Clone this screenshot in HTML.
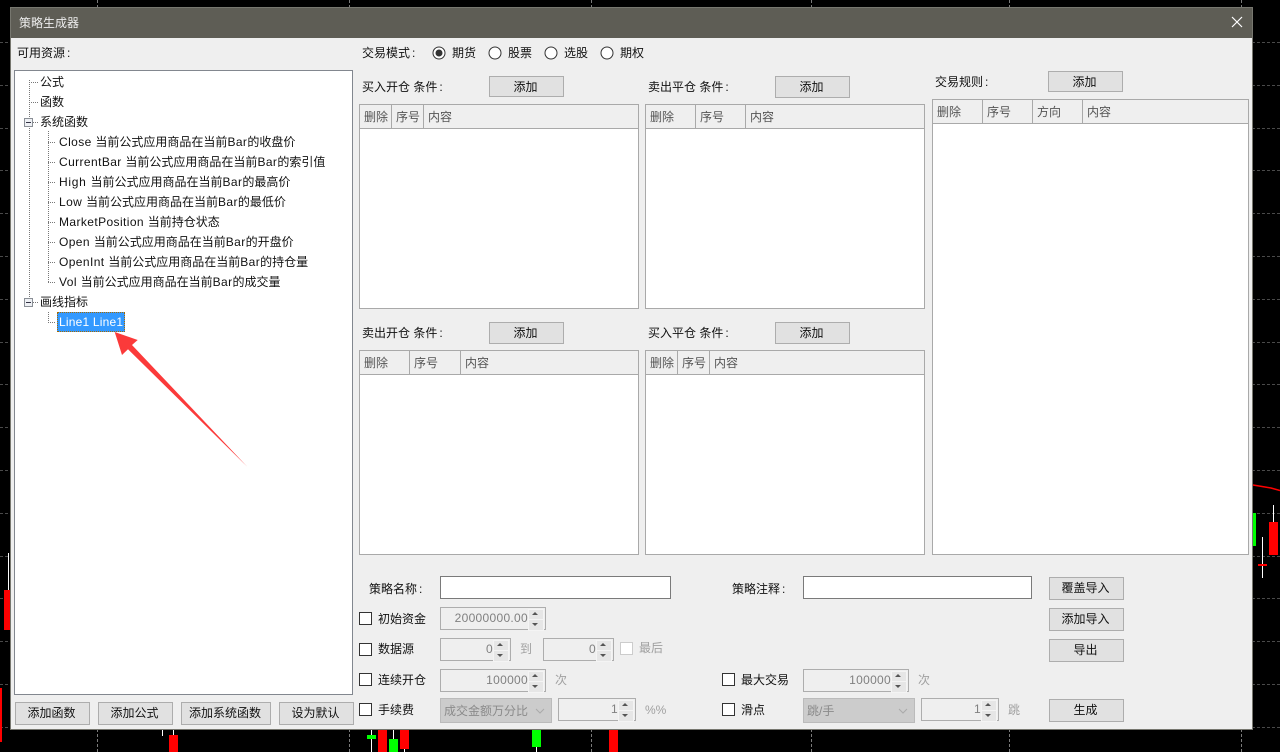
<!DOCTYPE html>
<html><head><meta charset="utf-8"><style>
html,body{margin:0;padding:0;background:#000;width:1280px;height:752px;overflow:hidden}
body{position:relative;font:12px/20px "Liberation Sans","Noto Sans CJK SC",sans-serif;color:#111}
div,span{position:absolute;box-sizing:border-box}
span{white-space:nowrap;height:20px}
em{font-style:normal;letter-spacing:.4px}
em.k{letter-spacing:0;padding-left:2px}
.h{left:0;width:1280px;height:0;border-top:1px dashed #4a4a4a}
.v{top:0;height:752px;width:0;border-left:1px dashed #7a7a7a}
.c{background:#f00}.g{background:#0f0}.w{background:#fff;width:1px}
.tbl{background:#fff;border:1px solid #a9a9a9}
.hd{left:0;right:0;top:0;height:24px;background:#efefef;border-bottom:1px solid #a9a9a9}
.sep{top:0;width:1px;height:23px;background:#a9a9a9}
.th{top:2px;color:#555}
.btn{background:#e1e1e1;border:1px solid #adadad;text-align:center;line-height:20px;color:#111;padding-right:2px}
.inp{background:#fff;border:1px solid #7a7a7a;height:23px}
.cb{width:13px;height:13px;background:#fff;border:1px solid #333}
.spin{background:#efefef;border:1px solid #adadad;height:23px;color:#808080;text-align:right;line-height:20px}
.spin b{position:absolute;right:17px;top:0;font-weight:normal;letter-spacing:.3px}
.up,.dn{position:absolute;right:1px;width:14px;height:10px;background:#e6e6e6;border:1px solid #f4f4f4}
.up{top:1px}.dn{top:11px}
.up:after,.dn:after{content:"";position:absolute;left:3px;border-left:3px solid transparent;border-right:3px solid transparent}
.up:after{top:2px;border-bottom:3px solid #555}
.dn:after{top:3px;border-top:3px solid #555}
.sel{background:#ccc;border:1px solid #bbb;height:25px;color:#8a8a8a;padding-left:3px;line-height:24px}
.dis{color:#a0a0a0}
.dh{height:1px;background-image:linear-gradient(90deg,#777 50%,transparent 50%);background-size:2px 1px}
.dv{width:1px;background-image:linear-gradient(#777 50%,transparent 50%);background-size:1px 2px}
.pm{width:9px;height:9px;background:#eef0f4;border:1px solid #8a8f96}
.pm:after{content:"";position:absolute;left:1px;top:3px;width:5px;height:1px;background:#334}
</style></head><body>
<div class="h" style="top:42px"></div><div class="h" style="top:85px"></div><div class="h" style="top:128px"></div><div class="h" style="top:170px"></div><div class="h" style="top:213px"></div><div class="h" style="top:256px"></div><div class="h" style="top:299px"></div><div class="h" style="top:342px"></div><div class="h" style="top:384px"></div><div class="h" style="top:427px"></div><div class="h" style="top:470px"></div><div class="h" style="top:513px"></div><div class="h" style="top:556px"></div><div class="h" style="top:598px"></div><div class="h" style="top:641px"></div><div class="h" style="top:684px"></div><div class="h" style="top:727px"></div>
<div class="v" style="left:97px"></div><div class="v" style="left:349px"></div><div class="v" style="left:591px"></div><div class="v" style="left:811px"></div><div class="v" style="left:1009px"></div><div class="v" style="left:1241px"></div>

<div class="w" style="left:8px;top:553px;height:37px"></div>
<div class="c" style="left:4px;top:590px;width:6px;height:40px"></div>
<div class="c" style="left:0;top:688px;width:2px;height:54px"></div>
<div class="w" style="left:162px;top:730px;height:6px"></div>
<div class="w" style="left:173px;top:730px;height:22px"></div>
<div class="c" style="left:169px;top:735px;width:9px;height:17px"></div>
<div class="w" style="left:371px;top:730px;height:22px"></div>
<div class="g" style="left:367px;top:735px;width:9px;height:4px"></div>
<div class="c" style="left:378px;top:730px;width:9px;height:22px"></div>
<div class="w" style="left:393px;top:730px;height:10px"></div>
<div class="g" style="left:389px;top:739px;width:9px;height:13px"></div>
<div class="w" style="left:404px;top:730px;height:22px"></div>
<div class="c" style="left:400px;top:730px;width:9px;height:19px"></div>
<div class="w" style="left:536px;top:730px;height:22px"></div>
<div class="g" style="left:532px;top:730px;width:9px;height:17px"></div>
<div class="c" style="left:609px;top:730px;width:9px;height:22px"></div>
<div class="g" style="left:1253px;top:513px;width:3px;height:33px"></div>
<div class="w" style="left:1262px;top:537px;height:41px"></div>
<div class="c" style="left:1258px;top:564px;width:9px;height:2px"></div>
<div class="w" style="left:1273px;top:505px;height:18px"></div>
<div class="c" style="left:1269px;top:522px;width:9px;height:33px"></div>
<svg style="position:absolute;left:1253px;top:480px" width="27" height="14"><path d="M0 5L9 6.500 18 8 27 10.500" stroke="#f00" stroke-width="1.500" fill="none"/></svg>

<!-- dialog -->
<div style="left:10px;top:7px;width:1243px;height:723px;background:#efefef;border:1px solid #77776f"></div>
<div style="left:11px;top:8px;width:1241px;height:30px;background:#5e5d55"></div>
<span style="left:19px;top:13px;color:#eee;font-size:12px">策略生成器</span>
<svg style="position:absolute;left:1231px;top:16px" width="12" height="12"><path d="M1 1L11 11M11 1L1 11" stroke="#fff" stroke-width="1.200"/></svg>

<span style="left:17px;top:43px">可用资源<em class="k">:</em></span>

<!-- tree -->
<div style="left:14px;top:70px;width:339px;height:625px;background:#fff;border:1px solid #82878f"></div>
<div class="dv" style="left:29px;top:80px;height:220px"></div>
<div class="dh" style="left:29px;top:82px;width:9px"></div>
<div class="dh" style="left:29px;top:102px;width:9px"></div>
<div class="dh" style="left:33px;top:122px;width:5px"></div>
<div class="dh" style="left:33px;top:302px;width:5px"></div>
<div class="pm" style="left:24px;top:118px"></div>
<div class="pm" style="left:24px;top:298px"></div>
<div class="dv" style="left:48px;top:131px;height:151px"></div>
<div class="dh" style="left:48px;top:142px;width:8px"></div>
<div class="dh" style="left:48px;top:162px;width:8px"></div>
<div class="dh" style="left:48px;top:182px;width:8px"></div>
<div class="dh" style="left:48px;top:202px;width:8px"></div>
<div class="dh" style="left:48px;top:222px;width:8px"></div>
<div class="dh" style="left:48px;top:242px;width:8px"></div>
<div class="dh" style="left:48px;top:262px;width:8px"></div>
<div class="dh" style="left:48px;top:282px;width:8px"></div>
<div class="dv" style="left:48px;top:312px;height:10px"></div>
<div class="dh" style="left:48px;top:322px;width:8px"></div>
<span style="left:40px;top:72px">公式</span>
<span style="left:40px;top:92px">函数</span>
<span style="left:40px;top:112px">系统函数</span>
<span style="left:59px;top:132px"><em>Close </em>当前公式应用商品在当前<em>Bar</em>的收盘价</span>
<span style="left:59px;top:152px"><em>CurrentBar </em>当前公式应用商品在当前<em>Bar</em>的索引值</span>
<span style="left:59px;top:172px"><em style="letter-spacing:.7px">High </em>当前公式应用商品在当前<em>Bar</em>的最高价</span>
<span style="left:59px;top:192px"><em>Low </em>当前公式应用商品在当前<em>Bar</em>的最低价</span>
<span style="left:59px;top:212px"><em>MarketPosition </em>当前持仓状态</span>
<span style="left:59px;top:232px"><em>Open </em>当前公式应用商品在当前<em>Bar</em>的开盘价</span>
<span style="left:59px;top:252px"><em>OpenInt </em>当前公式应用商品在当前<em>Bar</em>的持仓量</span>
<span style="left:59px;top:272px"><em>Vol </em>当前公式应用商品在当前<em>Bar</em>的成交量</span>
<span style="left:40px;top:292px">画线指标</span>
<div style="left:57px;top:312px;width:68px;height:20px;background:#3399ff;border:1px dotted #a66a00"></div>
<span style="left:59px;top:312px;color:#fff"><em style="letter-spacing:.2px">Line1 Line1</em></span>
<svg style="position:absolute;left:100px;top:320px" width="160" height="160"><path d="M14.700 12L37.700 20 32 25 147.300 146.700 28 29.300 22 35Z" fill="#fb3a3a"/></svg>

<div class="btn" style="left:15px;top:702px;width:75px;height:23px">添加函数</div>
<div class="btn" style="left:98px;top:702px;width:75px;height:23px">添加公式</div>
<div class="btn" style="left:181px;top:702px;width:90px;height:23px">添加系统函数</div>
<div class="btn" style="left:279px;top:702px;width:75px;height:23px">设为默认</div>

<!-- mode -->
<span style="left:362px;top:43px">交易模式<em class="k">:</em></span>
<svg style="position:absolute;left:430px;top:44px" width="190" height="18" fill="#fff" stroke="#333"><circle cx="9" cy="9" r="6"/><circle cx="9" cy="9" r="3.500" fill="#333" stroke="none"/><circle cx="65" cy="9" r="6"/><circle cx="121" cy="9" r="6"/><circle cx="177" cy="9" r="6"/></svg>
<span style="left:452px;top:43px">期货</span><span style="left:508px;top:43px">股票</span><span style="left:564px;top:43px">选股</span><span style="left:620px;top:43px">期权</span>

<span style="left:362px;top:77px">买入开仓 条件<em class="k">:</em></span>
<div class="btn" style="left:489px;top:76px;width:75px;height:21px;line-height:21px">添加</div>
<span style="left:648px;top:77px">卖出平仓 条件<em class="k">:</em></span>
<div class="btn" style="left:775px;top:76px;width:75px;height:22px;line-height:21px">添加</div>
<span style="left:935px;top:72px">交易规则<em class="k">:</em></span>
<div class="btn" style="left:1048px;top:71px;width:75px;height:21px;line-height:21px">添加</div>
<span style="left:362px;top:323px">卖出开仓 条件<em class="k">:</em></span>
<div class="btn" style="left:489px;top:322px;width:75px;height:22px;line-height:21px">添加</div>
<span style="left:648px;top:323px">买入平仓 条件<em class="k">:</em></span>
<div class="btn" style="left:775px;top:322px;width:75px;height:22px;line-height:21px">添加</div>

<div class="tbl" style="left:359px;top:104px;width:280px;height:205px"><div class="hd"><div class="sep" style="left:31px"></div><div class="sep" style="left:63px"></div><span class="th" style="left:4px">删除</span><span class="th" style="left:36px">序号</span><span class="th" style="left:68px">内容</span></div></div>
<div class="tbl" style="left:645px;top:104px;width:280px;height:205px"><div class="hd"><div class="sep" style="left:49px"></div><div class="sep" style="left:99px"></div><span class="th" style="left:4px">删除</span><span class="th" style="left:54px">序号</span><span class="th" style="left:104px">内容</span></div></div>
<div class="tbl" style="left:932px;top:99px;width:317px;height:456px"><div class="hd"><div class="sep" style="left:49px"></div><div class="sep" style="left:99px"></div><div class="sep" style="left:149px"></div><span class="th" style="left:4px">删除</span><span class="th" style="left:54px">序号</span><span class="th" style="left:104px">方向</span><span class="th" style="left:154px">内容</span></div></div>
<div class="tbl" style="left:359px;top:350px;width:280px;height:205px"><div class="hd"><div class="sep" style="left:49px"></div><div class="sep" style="left:100px"></div><span class="th" style="left:4px">删除</span><span class="th" style="left:54px">序号</span><span class="th" style="left:105px">内容</span></div></div>
<div class="tbl" style="left:645px;top:350px;width:280px;height:205px"><div class="hd"><div class="sep" style="left:31px"></div><div class="sep" style="left:63px"></div><span class="th" style="left:4px">删除</span><span class="th" style="left:36px">序号</span><span class="th" style="left:68px">内容</span></div></div>

<!-- bottom form -->
<span style="left:369px;top:579px">策略名称<em class="k">:</em></span>
<div class="inp" style="left:440px;top:576px;width:231px"></div>
<span style="left:732px;top:579px">策略注释<em class="k">:</em></span>
<div class="inp" style="left:803px;top:576px;width:229px"></div>
<div class="btn" style="left:1049px;top:577px;width:75px;height:23px">覆盖导入</div>
<div class="btn" style="left:1049px;top:608px;width:75px;height:23px">添加导入</div>
<div class="btn" style="left:1049px;top:639px;width:75px;height:23px">导出</div>
<div class="btn" style="left:1049px;top:699px;width:75px;height:23px">生成</div>

<div class="cb" style="left:359px;top:612px"></div><span style="left:378px;top:609px">初始资金</span>
<div class="spin" style="left:440px;top:607px;width:106px"><b>20000000.00</b><i class="up"></i><i class="dn"></i></div>
<div class="cb" style="left:359px;top:643px"></div><span style="left:378px;top:639px">数据源</span>
<div class="spin" style="left:440px;top:638px;width:71px"><b>0</b><i class="up"></i><i class="dn"></i></div>
<span class="dis" style="left:520px;top:639px">到</span>
<div class="spin" style="left:543px;top:638px;width:71px"><b>0</b><i class="up"></i><i class="dn"></i></div>
<div class="cb" style="left:620px;top:642px;border-color:#ccc"></div><span class="dis" style="left:639px;top:638px">最后</span>
<div class="cb" style="left:359px;top:673px"></div><span style="left:378px;top:670px">连续开仓</span>
<div class="spin" style="left:440px;top:669px;width:106px"><b>100000</b><i class="up"></i><i class="dn"></i></div>
<span class="dis" style="left:555px;top:670px">次</span>
<div class="cb" style="left:359px;top:703px"></div><span style="left:378px;top:700px">手续费</span>
<div class="sel" style="left:440px;top:698px;width:112px">成交金额万分比<svg style="position:absolute;right:6px;top:9px" width="10" height="6"><path d="M1 1L5 5 9 1" stroke="#aaa" fill="none"/></svg></div>
<div class="spin" style="left:558px;top:698px;width:78px"><b>1</b><i class="up"></i><i class="dn"></i></div>
<span class="dis" style="left:645px;top:700px">%%</span>

<div class="cb" style="left:722px;top:673px"></div><span style="left:741px;top:670px">最大交易</span>
<div class="spin" style="left:803px;top:669px;width:106px"><b>100000</b><i class="up"></i><i class="dn"></i></div>
<span class="dis" style="left:918px;top:670px">次</span>
<div class="cb" style="left:722px;top:703px"></div><span style="left:741px;top:700px">滑点</span>
<div class="sel" style="left:803px;top:698px;width:112px">跳/手<svg style="position:absolute;right:6px;top:9px" width="10" height="6"><path d="M1 1L5 5 9 1" stroke="#aaa" fill="none"/></svg></div>
<div class="spin" style="left:921px;top:698px;width:78px"><b>1</b><i class="up"></i><i class="dn"></i></div>
<span class="dis" style="left:1008px;top:700px">跳</span>
</body></html>
